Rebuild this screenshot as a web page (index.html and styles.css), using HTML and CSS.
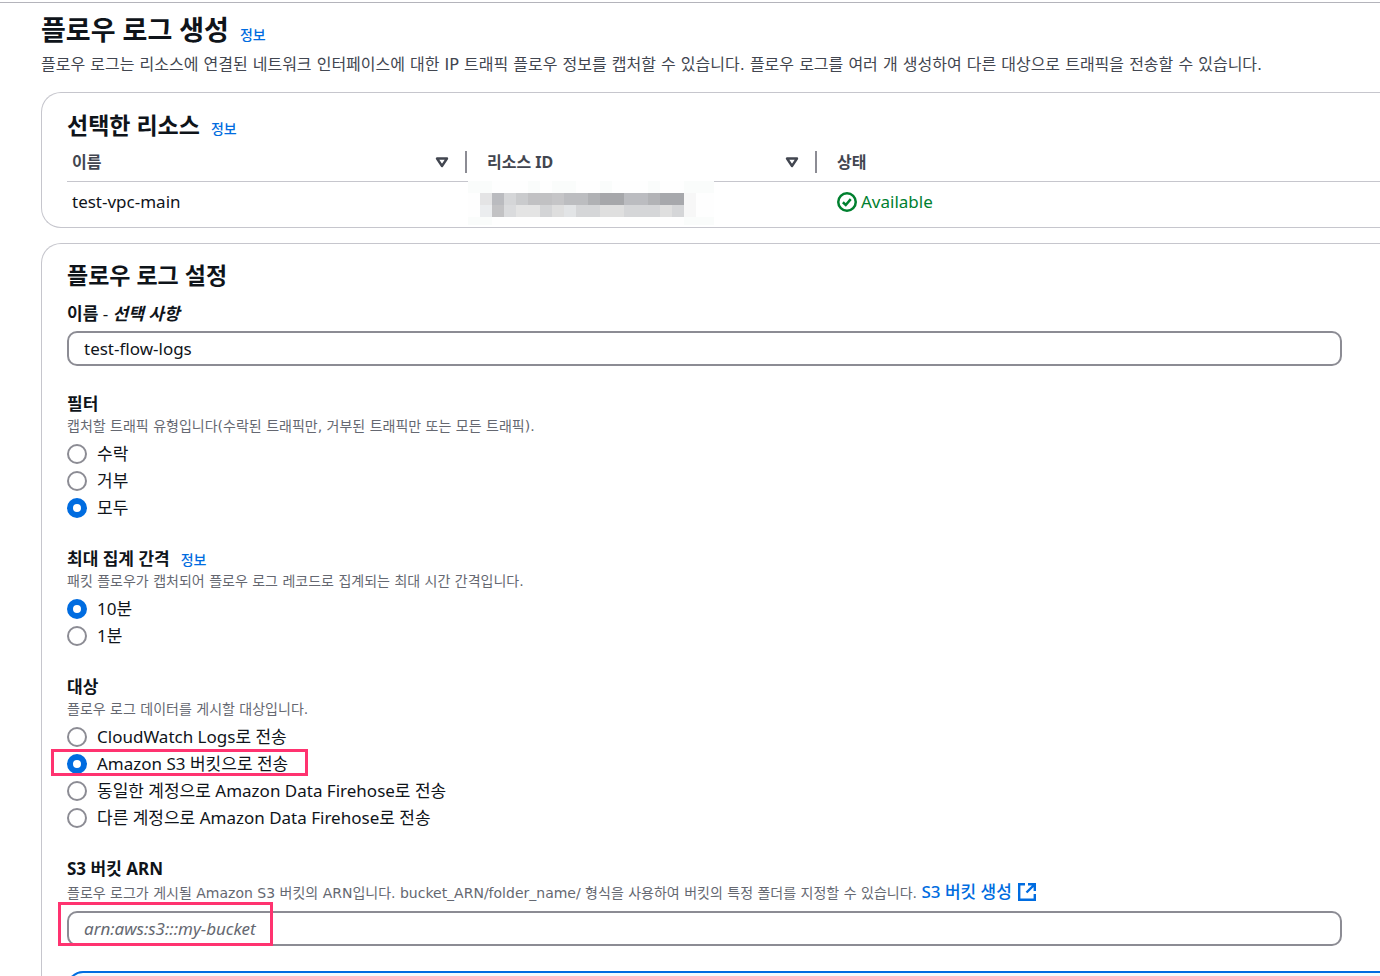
FILE: index.html
```html
<!DOCTYPE html>
<html lang="ko">
<head>
<meta charset="utf-8">
<title>플로우 로그 생성</title>
<link rel="stylesheet" href="styles.css">
</head>
<body>
<main class="page">
  <header class="page-header">
    <div class="title-row">
      <h1>플로우 로그 생성</h1>
      <a class="info" href="#">정보</a>
    </div>
    <p class="lead">플로우 로그는 리소스에 연결된 네트워크 인터페이스에 대한 IP 트래픽 플로우 정보를 캡처할 수 있습니다. 플로우 로그를 여러 개 생성하여 다른 대상으로 트래픽을 전송할 수 있습니다.</p>
  </header>

  <section class="card resources">
    <div class="title-row">
      <h2>선택한 리소스</h2>
      <a class="info" href="#">정보</a>
    </div>
    <table class="table">
      <colgroup><col class="col-name"><col class="col-id"><col></colgroup>
      <thead>
        <tr>
          <th scope="col"><div class="th">이름<svg class="sort" viewBox="0 0 14 12"><path d="M2 2.500h10L7 10z"/></svg></div></th>
          <th scope="col"><div class="th">리소스 ID<svg class="sort" viewBox="0 0 14 12"><path d="M2 2.500h10L7 10z"/></svg></div></th>
          <th scope="col"><div class="th">상태</div></th>
        </tr>
      </thead>
      <tbody>
        <tr>
          <td>test-vpc-main</td>
          <td class="masked">
            <svg class="mosaic" viewBox="0 0 246 44" shape-rendering="crispEdges">
              <rect width="246" height="44" fill="#fefefe"/>
              <path fill="#fafcfb" d="M0 0h24v12H0zM60 0h12v12H60zM84 0h24v12H84zM132 0h12v12h-12zM180 0h12v12h-12zM216 0h30v12h-30zM0 36h24v8H0zM216 36h30v8h-30z"/>
              <path fill="#e4e4e5" d="M12 12h12v12H12z"/><path fill="#babbbf" d="M24 12h12v12H24z"/>
              <path fill="#d5d6d8" d="M36 12h12v12H36z"/><path fill="#cacbcd" d="M48 12h12v12H48z"/>
              <path fill="#c1c1c3" d="M60 12h24v12H60z"/><path fill="#c5c5c7" d="M84 12h12v12H84z"/>
              <path fill="#bcbdc0" d="M96 12h24v12H96z"/><path fill="#b0b1b4" d="M120 12h12v12h-12z"/>
              <path fill="#a6a7aa" d="M132 12h24v12h-24z"/><path fill="#bbbcc0" d="M156 12h24v12h-24z"/>
              <path fill="#b2b3b6" d="M180 12h12v12h-12z"/><path fill="#a7a8ac" d="M192 12h24v12h-24z"/>
              <path fill="#f7f7f7" d="M216 12h12v12h-12zM216 24h12v12h-12z"/>
              <path fill="#ebedef" d="M12 24h12v12H12z"/><path fill="#c2c2c4" d="M24 24h12v12H24z"/>
              <path fill="#dadbdd" d="M36 24h12v12H36z"/><path fill="#e4e4e4" d="M48 24h24v12H48z"/>
              <path fill="#d3d4d6" d="M72 24h12v12H72z"/><path fill="#dedede" d="M84 24h12v12H84z"/>
              <path fill="#e2e4e6" d="M96 24h12v12H96z"/><path fill="#d5d6d8" d="M108 24h24v12h-24zM156 24h36v12h-36zM204 24h12v12h-12z"/>
              <path fill="#dfdfdf" d="M132 24h24v12h-24zM192 24h12v12h-12z"/>
            </svg>
          </td>
          <td><span class="status"><svg class="status-icon" viewBox="0 0 16 16"><circle cx="8" cy="8" r="7"/><path d="M4.700 8.200l2.300 2.200 4-4.700"/></svg>Available</span></td>
        </tr>
      </tbody>
    </table>
  </section>

  <section class="card settings">
    <h2>플로우 로그 설정</h2>
    <div class="fields">
      <div class="field">
        <label class="label" for="name">이름 <span class="dash">-</span> <i>선택 사항</i></label>
        <input class="input" id="name" type="text" value="test-flow-logs">
      </div>

      <div class="field" role="radiogroup" aria-labelledby="filter">
        <div class="label" id="filter">필터</div>
        <p class="hint">캡처할 트래픽 유형입니다(수락된 트래픽만, 거부된 트래픽만 또는 모든 트래픽).</p>
        <div class="radios">
          <label class="radio"><input type="radio" name="filter">수락</label>
          <label class="radio"><input type="radio" name="filter">거부</label>
          <label class="radio"><input type="radio" name="filter" checked>모두</label>
        </div>
      </div>

      <div class="field" role="radiogroup" aria-labelledby="interval">
        <div class="label label-row"><span id="interval">최대 집계 간격</span><a class="info" href="#">정보</a></div>
        <p class="hint">패킷 플로우가 캡처되어 플로우 로그 레코드로 집계되는 최대 시간 간격입니다.</p>
        <div class="radios">
          <label class="radio"><input type="radio" name="interval" checked>10분</label>
          <label class="radio"><input type="radio" name="interval">1분</label>
        </div>
      </div>

      <div class="field" role="radiogroup" aria-labelledby="dest">
        <div class="label" id="dest">대상</div>
        <p class="hint">플로우 로그 데이터를 게시할 대상입니다.</p>
        <div class="radios">
          <label class="radio"><input type="radio" name="dest">CloudWatch Logs로 전송</label>
          <label class="radio marked"><input type="radio" name="dest" checked>Amazon S3 버킷으로 전송<span class="mark mark-option"></span></label>
          <label class="radio"><input type="radio" name="dest">동일한 계정으로 Amazon Data Firehose로 전송</label>
          <label class="radio"><input type="radio" name="dest">다른 계정으로 Amazon Data Firehose로 전송</label>
        </div>
      </div>

      <div class="field">
        <label class="label" for="arn">S3 버킷 ARN</label>
        <p class="hint hint-link">플로우 로그가 게시될 Amazon S3 버킷의 ARN입니다. bucket_ARN/folder_name/ 형식을 사용하여 버킷의 특정 폴더를 지정할 수 있습니다. <a class="link" href="#">S3 버킷 생성<svg class="external" viewBox="0 0 18 18"><path d="M7 1.200H1.200v15.600h15.600V11M10 1.200h6.800V8M16.500 1.500L8.500 9.500"/></svg></a></p>
        <div class="marked">
          <input class="input" id="arn" type="text" placeholder="arn:aws:s3:::my-bucket">
          <span class="mark mark-input"></span>
        </div>
      </div>
    </div>
    <div class="alert"></div>
  </section>
</main>
</body>
</html>
```

FILE: styles.css
```css
* { box-sizing: border-box; }

body {
  margin: 0;
  background: #fff;
  color: #0f141a;
  font: 17px/24px "Noto Sans", "Noto Sans CJK KR", sans-serif;
}

h1, h2, p { margin: 0; }
h1 { font-size: 27px; line-height: 36px; }
h2 { font-size: 23px; line-height: 30px; }
a { color: #006ce0; text-decoration: none; }

.page {
  height: calc(100vh - 2px);
  overflow: hidden;
  margin-top: 2px;
  padding: 9px 0 0 41px;
  border-top: 1px solid #b4b4bb;
}

.page-header { margin-bottom: 14px; }
.title-row { display: flex; align-items: baseline; gap: 11px; }
.info { font-size: 14px; font-weight: 500; line-height: 20px; }
.lead {
  padding-top: 3px;
  color: #424650;
  font-family: "DejaVu Sans", "Noto Sans CJK KR", sans-serif;
  font-size: 16px;
  line-height: 27px;
}

.card {
  margin-bottom: 15px;
  padding-left: 25px;
  border: 1px solid #c6c6cd;
  border-right: 0;
  border-radius: 20px 0 0 20px;
}
.resources { padding-top: 17px; padding-bottom: 6px; }
.settings { padding-top: 16px; }

.table {
  width: 100%;
  border-collapse: collapse;
  table-layout: fixed;
}
.col-name { width: 400px; }
.col-id { width: 350px; }
.table th {
  height: 41px;
  padding: 3px 0 0;
  border-bottom: 1px solid #c6c6cd;
  color: #424650;
  font-size: 16px;
  text-align: left;
}
.table td { height: 40px; padding: 1px 0 0 20px; }
.table td:first-child { padding-left: 5px; }
.th {
  display: flex;
  align-items: center;
  justify-content: space-between;
  height: 22px;
  padding: 0 16px 0 20px;
}
th:first-child .th { padding-left: 5px; }
th:not(:last-child) .th { border-right: 2px solid #8c8c94; }
.sort { width: 14px; height: 12px; fill: none; stroke: #424650; stroke-width: 2.4; stroke-linejoin: round; }
.masked { position: relative; }
.mosaic { position: absolute; top: -1px; left: 1px; width: 246px; height: 44px; }
.status { display: flex; align-items: center; gap: 4px; color: #00802f; }
.status-icon { width: 20px; height: 20px; fill: none; stroke: #00802f; stroke-width: 2; }

.fields {
  display: flex;
  flex-direction: column;
  gap: 26px;
  padding: 12px 38px 0 0;
}
.label { display: block; font-weight: 700; line-height: 24px; }
.dash { font-weight: 400; }
.label-row { display: flex; align-items: baseline; gap: 11px; }
.hint {
  color: #656871;
  font-family: "DejaVu Sans", "Noto Sans CJK KR", sans-serif;
  font-size: 14px;
  line-height: 21px;
}
.hint-link { line-height: 25px; }
.link {
  font-family: "Noto Sans", "Noto Sans CJK KR", sans-serif;
  font-size: 17px;
  font-weight: 500;
  line-height: 20px;
}
.external {
  width: 18px;
  height: 18px;
  margin-left: 6px;
  vertical-align: -3px;
  fill: none;
  stroke: #006ce0;
  stroke-width: 2.4;
}

.input {
  display: block;
  width: 100%;
  height: 35px;
  margin-top: 5px;
  padding: 0 15px;
  border: 2px solid #8c8c94;
  border-radius: 10px;
  background: #fff;
  color: #0f141a;
  font: inherit;
}
.input::placeholder { color: #656871; font-style: italic; }

.radios { padding-top: 3px; }
.radio {
  display: flex;
  align-items: center;
  gap: 10px;
  width: fit-content;
  height: 27px;
}
.radio input {
  appearance: none;
  width: 20px;
  height: 20px;
  margin: 0;
  border: 2px solid #8c8c94;
  border-radius: 50%;
  background: #fff;
}
.radio input:checked { border: 6px solid #006ce0; }

.marked { position: relative; }
.mark { position: absolute; border: 3px solid #ff3370; pointer-events: none; }
.mark-option { top: -1px; left: -16px; right: -20px; height: 27px; }
.mark-input { top: -9px; left: -9px; width: 215px; height: 44px; }

.alert {
  height: 60px;
  margin-top: 25px;
  border: 2px solid #006ce0;
  border-right: 0;
  border-radius: 16px 0 0 16px;
  background: #f0fbff;
}
```
